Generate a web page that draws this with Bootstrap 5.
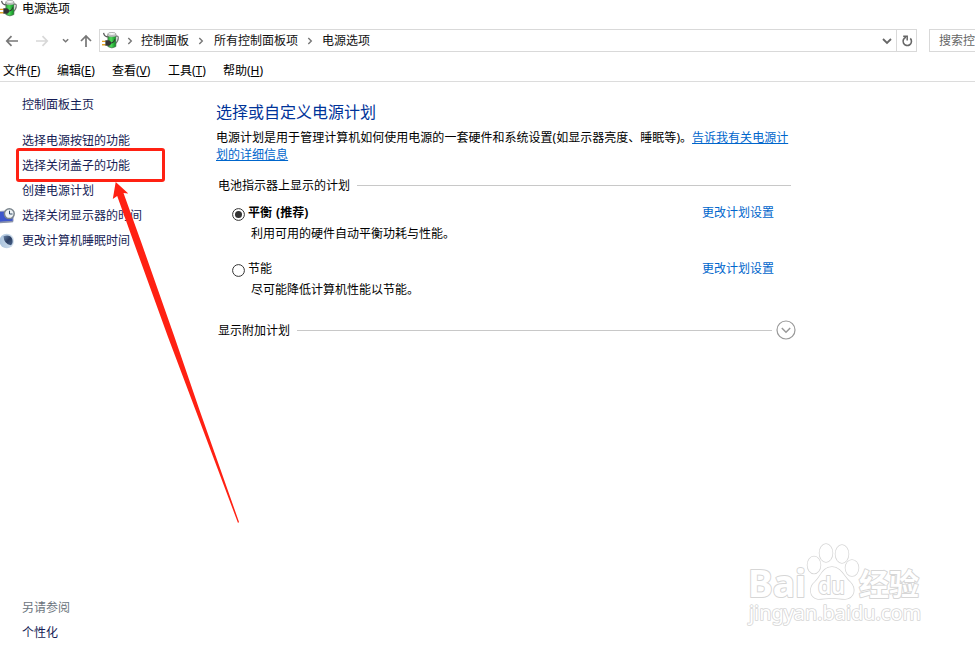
<!DOCTYPE html>
<html lang="zh-CN">
<head>
<meta charset="utf-8">
<meta name="viewport" content="width=device-width, initial-scale=1">
<title>电源选项</title>
<link href="https://cdn.jsdelivr.net/npm/bootstrap@5.3.0/dist/css/bootstrap.min.css" rel="stylesheet">
<style>
body{font:12px/17px "Noto Sans","Noto Sans CJK SC",sans-serif;color:#000;background:#fff;height:648px;overflow:hidden}
svg{display:block;flex:none}
.window{height:648px}
.titlebar{height:17px;gap:5px}
.navrow{height:23px;margin-top:12px}
.arrows{width:99px;flex:none}
.address{border:1px solid #d9d9d9;width:818px;flex:none;color:#111;padding-left:2px}
.address span{line-height:17px;margin-top:-1px}
.crumb-a{margin:0 9px 0 8px}.crumb-b{margin:0 9px 0 10px}.crumb-c{margin-left:9px}
.refresh{width:20px;height:21px;border-left:1px solid #d9d9d9}
.search{border:1px solid #d9d9d9;margin-left:12px;padding-left:9px;width:90px;flex:none;color:#666}
.menus{height:30px;padding:7px 0 0 3px;border-bottom:1px solid #dcdcdc}
.menus span{flex:none}
.m1{width:54px}.m2{width:55px}.m3{width:56px}.m4{width:55px}
.side{width:216px;flex:none;padding:10px 0 3px;color:#151c55}
.side a{display:flex;align-items:center;height:25px;color:#151c55;text-decoration:none}
.ico{width:22px;flex:none}
.home{margin-bottom:11px}
.highlight-box{left:16px;top:148px;width:149px;height:34px;border:3px solid #ff2113;border-radius:3px}
.pointer{left:100px;top:170px}
.main{width:580px;flex:none;padding-top:18px}
.main h1{font-size:16px;line-height:24px;font-weight:400;color:#003399;margin:0 0 5px}
.lnk{color:#0066cc}
.intro{letter-spacing:.02px}
.rule{height:1px;background:#c8c8c8}
.group-title{margin-top:14px;padding-left:2px}
.group-title .rule{margin-left:7px;margin-right:5px}
.plans{padding:10px 0 0 16px}
.plan{height:56px}
.plan b{word-spacing:1px}
.plan-link{margin-left:auto;margin-right:22px;text-decoration:none}
.desc{padding-left:19px;line-height:17px;margin-top:4px}
.radio{margin:4px 3px 0 0}
.extra{margin-top:4px;padding-left:2px}
.extra .rule{margin-left:7px;margin-right:4px}
.watermark{left:735px;top:530px}
</style>
<script src="https://cdn.jsdelivr.net/npm/bootstrap@5.3.0/dist/js/bootstrap.bundle.min.js"></script>
</head>
<body>
<svg width="0" height="0" class="position-absolute"><defs>
<linearGradient id="green" x1="0" x2="1"><stop offset="0" stop-color="#2f9e38"/><stop offset=".4" stop-color="#4ddb58"/><stop offset="1" stop-color="#0b8a20"/></linearGradient>
<symbol id="power" viewBox="0 0 16 16">
<path d="M13 4q2.300-.7 2.300 1.500 0 3.500-2.800 5.500" fill="none" stroke="#777" stroke-width="1.200"/>
<path d="M5.500 2.500v11.200q3.800 2.600 7.600 0V2.500z" fill="url(#green)" stroke="#4d6a52" stroke-width=".6"/>
<path d="M5.500 2v1.700q3.800 1.600 7.600 0V2z" fill="#dfe6e2" stroke="#888" stroke-width=".5"/>
<ellipse cx="9.300" cy="1.800" rx="3.800" ry="1.400" fill="#f5f7f6" stroke="#888" stroke-width=".6"/>
<path d="M1.500 .8q.5 3.700 4.500 3.900" fill="none" stroke="#555" stroke-width="1.100"/>
<path d="M0 8.800h3.500M0 12h3.500" stroke="#e2a52a" stroke-width="1.300"/>
<path d="M3.200 7.800h2.600q2.700.3 2.700 2.600t-2.700 2.600H3.200z" fill="#343434"/><path d="M8 10.500q3.200 0 4-3.500" fill="none" stroke="#333" stroke-width="1"/>
</symbol>
<symbol id="sep" viewBox="0 0 6 8"><path d="M1.300 1l3 3-3 3" fill="none" stroke="#777" stroke-width="1.400"/></symbol>
</defs></svg>
<div class="window d-flex flex-column position-relative">
<header>
<div class="titlebar d-flex align-items-center"><svg width="17" height="17"><use href="#power"/></svg><span>电源选项</span></div>
<div class="navrow d-flex">
<svg class="arrows" width="99" height="23" fill="none" stroke="#777" stroke-width="1.700"><path d="M18 12H7M11.500 7.200L6.800 12l4.700 4.800"/><path stroke="#d8d8d8" d="M36 12h11M42.500 7.200l4.700 4.800-4.700 4.800"/><path d="M63 10.200l2.600 2.600 2.600-2.600" stroke-width="1.500"/><path d="M86 18V7M81 12l5-5 5 5"/></svg>
<div class="address d-flex align-items-center">
<svg width="17" height="17" class="me-2"><use href="#power"/></svg>
<svg width="6" height="8"><use href="#sep"/></svg><span class="crumb-a">控制面板</span>
<svg width="6" height="8"><use href="#sep"/></svg><span class="crumb-b">所有控制面板项</span>
<svg width="6" height="8"><use href="#sep"/></svg><span class="crumb-c">电源选项</span>
<svg class="ms-auto me-1" width="10" height="8" fill="none" stroke="#666" stroke-width="1.800"><path d="M1 2l4 4 4-4"/></svg>
<div class="refresh d-flex align-items-center justify-content-center"><svg width="12" height="14" fill="none" stroke="#666" stroke-width="1.600"><path d="M9.300 4.400A4.200 4.200 0 1 1 5 3.300"/><path d="M2.200 2.300h4v4.200" stroke-width="1.500"/></svg></div>
</div>
<div class="search d-flex align-items-center text-nowrap">搜索控制面板</div>
</div>
<nav class="menus d-flex align-items-center">
<span class="m1">文件(<u>F</u>)</span><span class="m2">编辑(<u>E</u>)</span><span class="m3">查看(<u>V</u>)</span><span class="m4">工具(<u>T</u>)</span><span>帮助(<u>H</u>)</span>
</nav>
</header>
<div class="d-flex flex-grow-1">
<aside class="side d-flex flex-column">
<a href="#" class="home"><span class="ico"></span>控制面板主页</a>
<a href="#"><span class="ico"></span>选择电源按钮的功能</a>
<a href="#"><span class="ico"></span>选择关闭盖子的功能</a>
<a href="#"><span class="ico"></span>创建电源计划</a>
<a href="#"><span class="ico"><svg width="16" height="16"><path d="M-1 3.500l8-.5 6 6v4.500l-14 1z" fill="#3d56cc" stroke="#8d98ba"/><path d="M0 14.500l13-1" stroke="#8c94aa" stroke-width="1.500"/><circle cx="9.300" cy="5.700" r="4.900" fill="#edf2f5" stroke="#7b858d" stroke-width="1.500"/><path d="M9.500 2.700v3.300h3" fill="none" stroke="#334b65"/></svg></span>选择关闭显示器的时间</a>
<a href="#"><span class="ico"><svg width="16" height="16"><defs><linearGradient id="moon"><stop stop-color="#a9c2dc"/><stop offset="1" stop-color="#d4e1ee"/></linearGradient><linearGradient id="night" x1="0" y1="0" x2="1" y2="1"><stop stop-color="#6681a6"/><stop offset=".5" stop-color="#2b3d60"/><stop offset="1" stop-color="#4b668f"/></linearGradient></defs><circle cx="6.800" cy="8" r="7.300" fill="url(#moon)"/><path d="M3.500 3.200Q10 1 12.300 6q1.200 4.500-1.500 6.300Q4 11 3.500 3.200" fill="url(#night)"/></svg></span>更改计算机睡眠时间</a>
<a href="#" class="mt-auto text-secondary"><span class="ico"></span>另请参阅</a>
<a href="#"><span class="ico"></span>个性化</a>
</aside>
<main class="main">
<h1>选择或自定义电源计划</h1>
<div class="intro text-nowrap">电源计划是用于管理计算机如何使用电源的一套硬件和系统设置(如显示器亮度、睡眠等)。<a class="lnk" href="#">告诉我有关电源计<br>划的详细信息</a></div>
<div class="group-title d-flex align-items-center"><span>电池指示器上显示的计划</span><div class="rule flex-grow-1"></div></div>
<div class="plans">
<div class="plan"><div class="d-flex"><svg class="radio" width="13" height="13"><circle cx="6.500" cy="6.500" r="5.900" fill="#fff" stroke="#333"/><circle cx="6.500" cy="6.500" r="3.500" fill="#333"/></svg><b>平衡 (推荐)</b><a href="#" class="lnk plan-link">更改计划设置</a></div><div class="desc">利用可用的硬件自动平衡功耗与性能。</div></div>
<div class="plan"><div class="d-flex"><svg class="radio" width="13" height="13"><circle cx="6.500" cy="6.500" r="5.900" fill="#fff" stroke="#333"/></svg><span>节能</span><a href="#" class="lnk plan-link">更改计划设置</a></div><div class="desc">尽可能降低计算机性能以节能。</div></div>
</div>
<div class="extra d-flex align-items-center"><span>显示附加计划</span><div class="rule flex-grow-1"></div><svg width="20" height="20" fill="none" stroke="#999" stroke-width="1.200"><circle cx="10" cy="10" r="9"/><path d="M5.800 8l4.200 4.200L14.200 8" stroke-width="1.500"/></svg></div>
</main>
</div>
<div class="highlight-box position-absolute"></div>
<svg class="pointer position-absolute" width="150" height="360"><path fill="#ff2113" d="M15.700 12L28.300 23.500l-4.800-.5L41.500 73l33 94L99.500 240l39.500 112-1 1L95.500 240 68 167 34 73 17.200 26l-4.400 3z"/></svg>
<svg class="watermark position-absolute" width="200" height="110" fill="#fff" stroke="#d6d6d6" stroke-width="2" stroke-linejoin="round" paint-order="stroke" font-family="Noto Sans, Noto Sans CJK SC, sans-serif">
<text x="13" y="67" font-size="38" font-weight="700" textLength="58" lengthAdjust="spacingAndGlyphs">Bai</text>
<g stroke-width="1.500"><ellipse cx="79" cy="35" rx="6.500" ry="8.500"/><ellipse cx="91" cy="23" rx="6.500" ry="9"/><ellipse cx="107" cy="24" rx="6.500" ry="9"/><ellipse cx="117" cy="38" rx="6.500" ry="8"/><path d="M97 37c9 0 12 10 18 15 6 6 5 16-5 17-5 0-8-1-13-1s-9 1-14 1c-9-2-9-12-3-17 6-6 8-15 17-15z"/></g>
<text x="83" y="64" font-size="24" font-weight="600" textLength="27" lengthAdjust="spacingAndGlyphs">du</text>
<text x="124" y="65" font-size="30" font-weight="700" textLength="60" lengthAdjust="spacingAndGlyphs">经验</text>
<text x="14" y="90" font-size="20" font-weight="400" stroke-width="1.700" textLength="172" lengthAdjust="spacingAndGlyphs">jingyan.baidu.com</text>
</svg>
</div>
</body>
</html>
